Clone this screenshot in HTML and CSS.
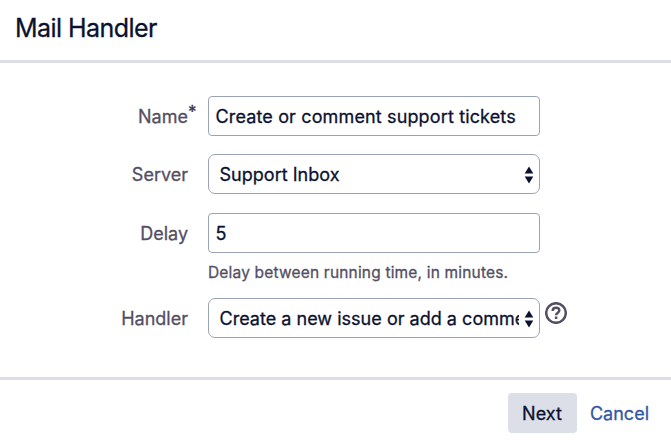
FILE: index.html
```html
<!DOCTYPE html>
<html lang="en">
<head>
<meta charset="utf-8">
<title>Mail Handler</title>
<link rel="stylesheet" href="styles.css">
</head>
<body>
<form class="dialog">
  <header class="dialog-header"><h1>Mail Handler</h1></header>
  <main class="fields">
    <div class="row">
      <label for="name">Name<sup class="required">*</sup></label>
      <input class="control" id="name" type="text" value="Create or comment support tickets">
    </div>
    <div class="row">
      <label for="server">Server</label>
      <button class="control select" id="server" type="button">
        <span class="value">Support Inbox</span>
        <svg class="arrows" viewBox="0 0 10 18"><path d="M5 0.5 9.3 7.5H0.7ZM5 17.5 9.3 10.5H0.7Z"/></svg>
      </button>
    </div>
    <div class="row">
      <label for="delay">Delay</label>
      <input class="control" id="delay" type="text" value="5">
    </div>
    <p class="hint">Delay between running time, in minutes.</p>
    <div class="row">
      <label for="handler">Handler</label>
      <button class="control select" id="handler" type="button">
        <span class="value">Create a new issue or add a comment</span>
        <svg class="arrows" viewBox="0 0 10 18"><path d="M5 0.5 9.3 7.5H0.7ZM5 17.5 9.3 10.5H0.7Z"/></svg>
      </button>
      <svg class="help" viewBox="0 0 22 22"><circle cx="11" cy="11" r="9.8"/><path d="M7.7 8.9C7.7 6.8 9.1 5.8 11 5.8S14.3 6.8 14.3 8.5C14.3 10.6 11.1 10.8 11.1 13.2M11.1 14.6V17"/></svg>
    </div>
  </main>
  <footer class="dialog-footer">
    <button class="next" type="submit">Next</button>
    <a class="cancel">Cancel</a>
  </footer>
</form>
</body>
</html>
```
FILE: styles.css
```css
* { box-sizing: border-box; }
body {
  margin: 0;
  background: #fff;
  color: #0b1230;
  font: 18px/24px Inter, "Liberation Sans", sans-serif;
  -webkit-text-stroke: 0.3px currentColor;
}
.dialog { height: 444px; display: flex; flex-direction: column; overflow: hidden; }
.dialog-header {
  height: 63px;
  padding: 13px 15px 0;
  border-bottom: 3px solid #dcdfe8;
}
h1 { margin: 0; font-size: 25px; line-height: 30px; font-weight: 400; letter-spacing: -0.55px; }
.fields { height: 314px; padding-top: 33px; }
.row { display: flex; align-items: center; height: 40px; margin-bottom: 18px; }
.row:nth-child(2) { margin-bottom: 19px; }
label { width: 188px; margin-right: 20px; padding-top: 1px; text-align: right; color: #544f63; }
.required {
  display: inline-block;
  width: 0;
  color: #3a3548;
  font-size: 17px;
  line-height: 0;
  vertical-align: 5px;
}
.control {
  width: 332px;
  height: 40px;
  padding: 1px 7px 0 6.5px;
  border: 1px solid #9aa3b5;
  border-radius: 4px;
  background: #fff;
  color: inherit;
  font: inherit;
  letter-spacing: 0.14px;
  -webkit-text-stroke: inherit;
}
.select {
  display: flex;
  align-items: center;
  padding: 1px 5px 0 10.5px;
  border-radius: 7px;
  letter-spacing: 0.02px;
  text-align: left;
}
.value { flex: 1; min-width: 0; overflow: hidden; white-space: nowrap; }
.arrows { width: 10px; height: 18px; margin-left: 5px; fill: #0b1230; }
.hint {
  margin: -10px 0 13px 208px;
  color: #544f63;
  font-size: 15.5px;
  line-height: 24px;
  letter-spacing: 0.18px;
}
.help {
  width: 22px;
  height: 22px;
  margin: -11px 0 0 5px;
  fill: none;
  stroke: #544f63;
  stroke-width: 2.5;
}
.dialog-footer {
  flex: 1;
  display: flex;
  align-items: flex-start;
  justify-content: flex-end;
  padding: 13px 22px 0;
  border-top: 3px solid #dcdfe8;
}
.next {
  width: 69px;
  height: 40px;
  padding: 1px 1px 0 0;
  margin-right: 13px;
  border: 0;
  border-radius: 4px;
  background: #dcdfe8;
  color: inherit;
  font: inherit;
  -webkit-text-stroke: inherit;
}
.cancel { color: #3557a0; line-height: 42px; }
```
